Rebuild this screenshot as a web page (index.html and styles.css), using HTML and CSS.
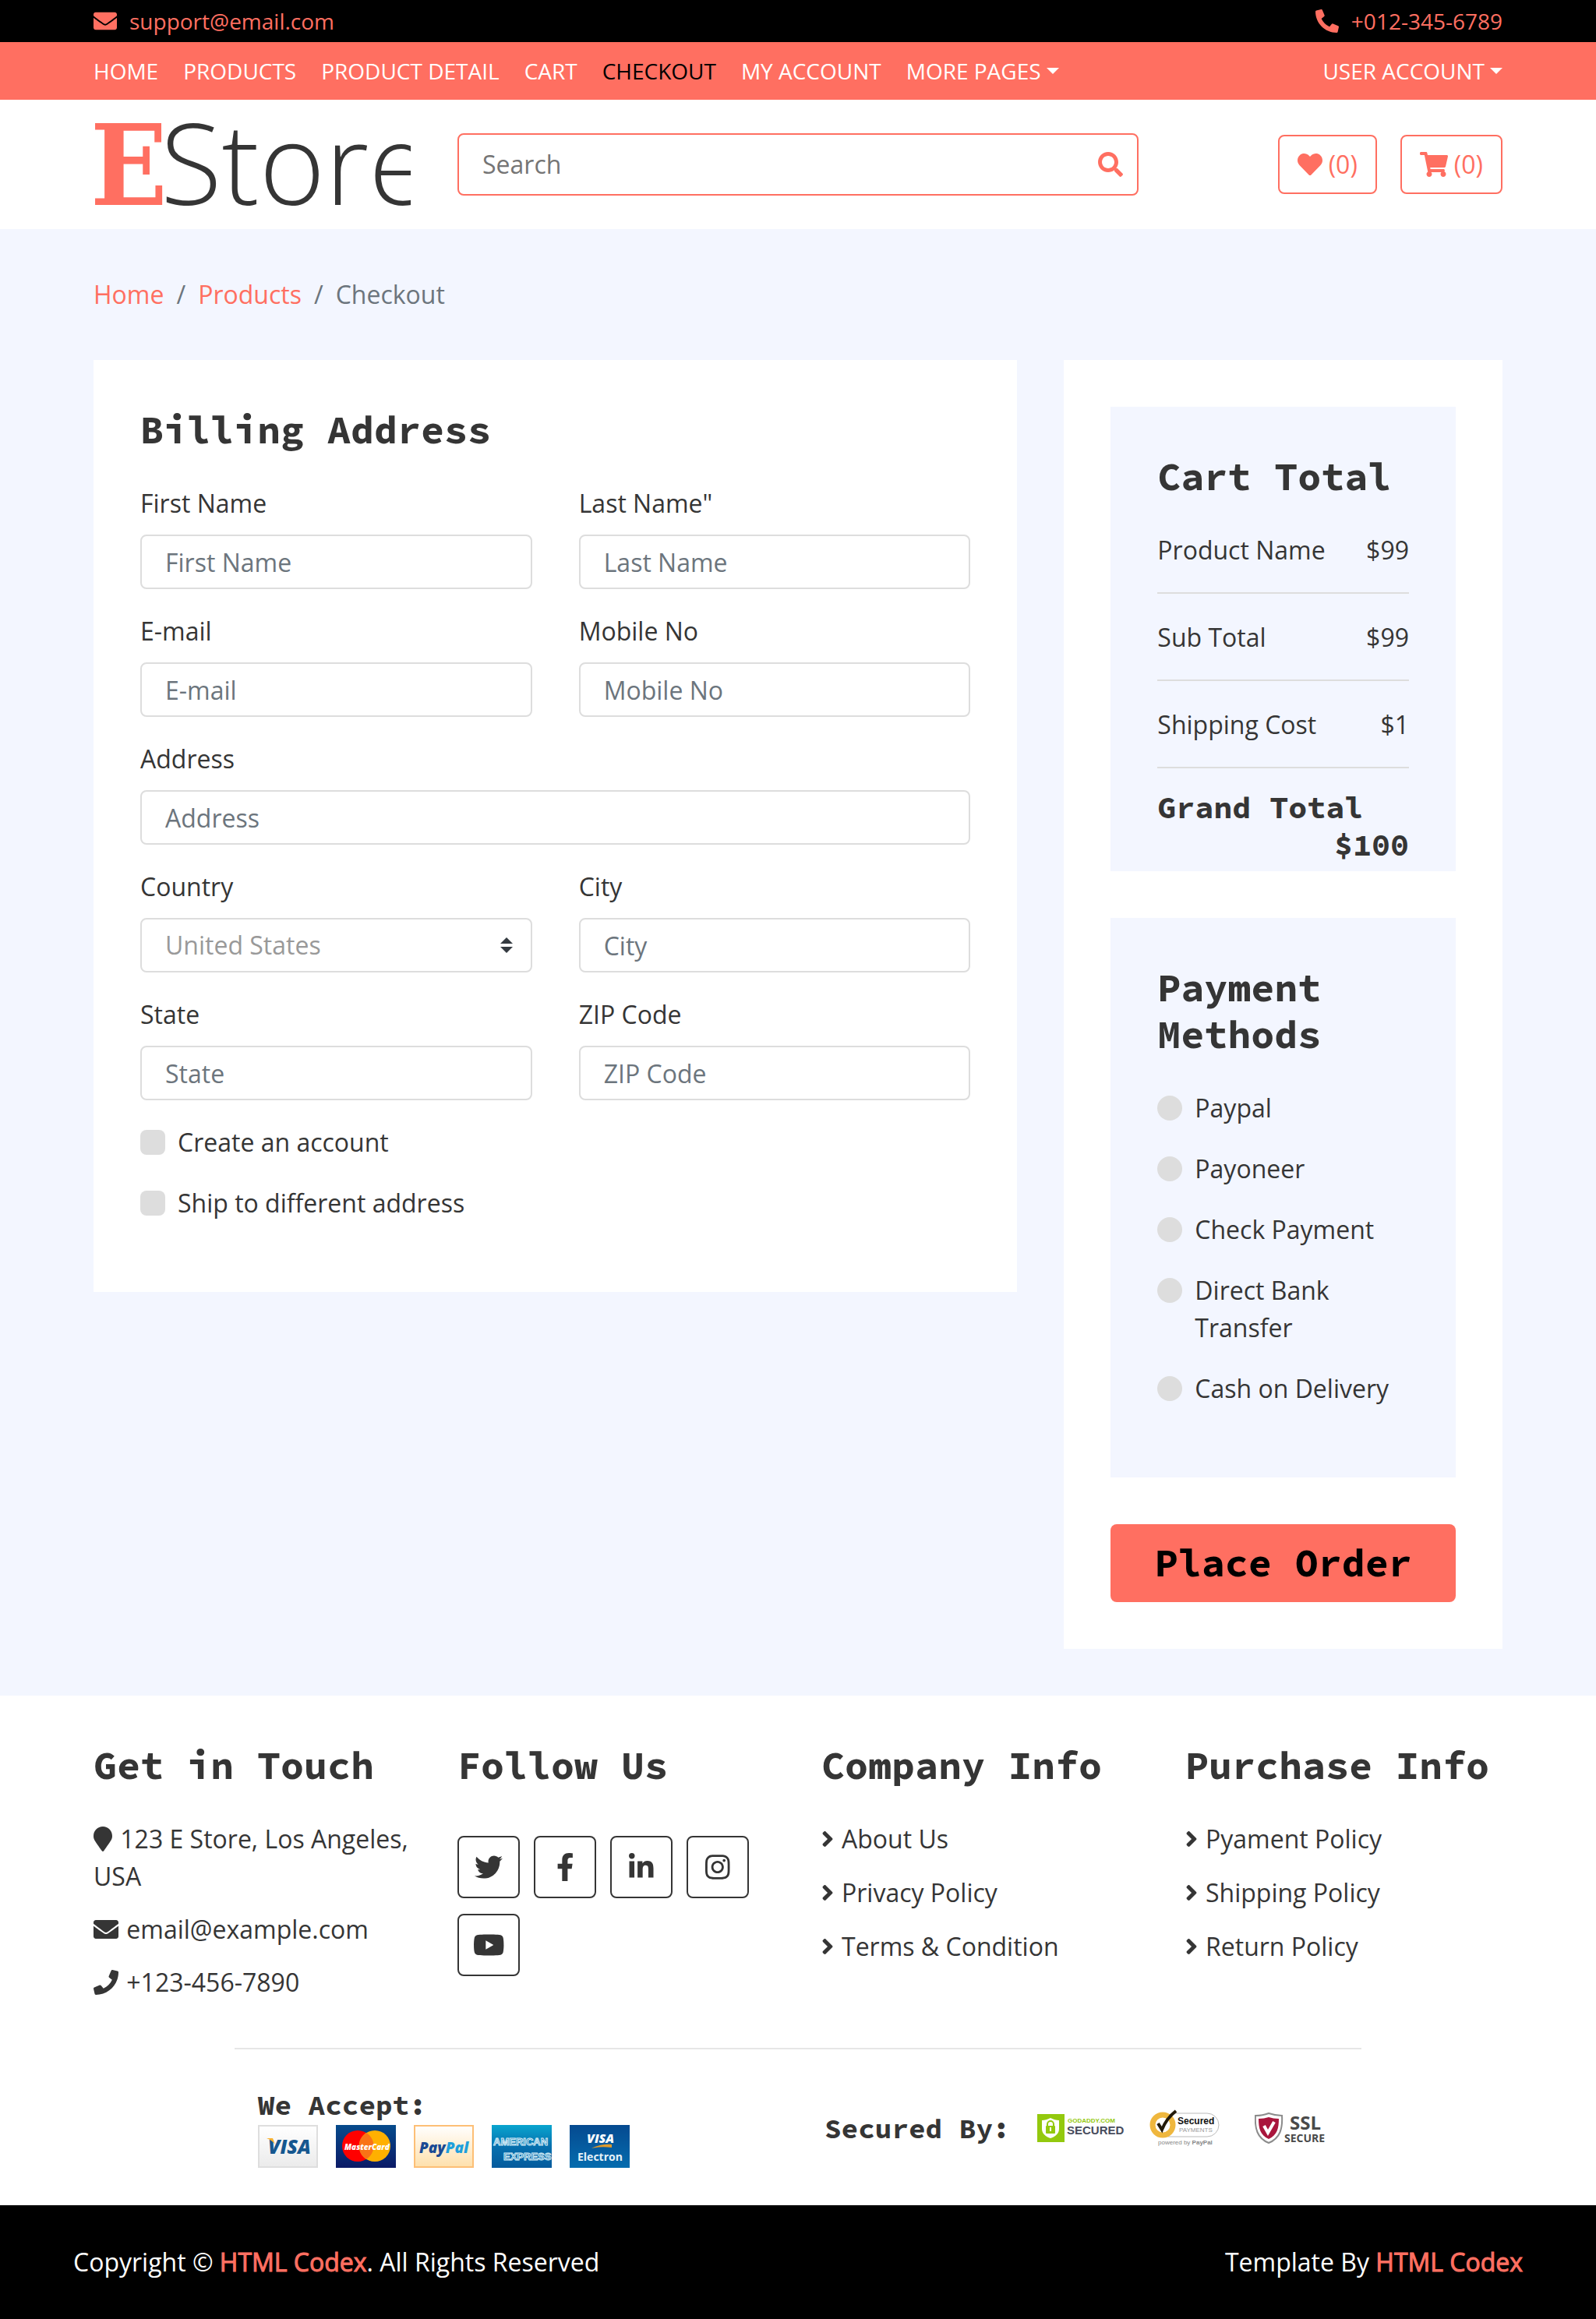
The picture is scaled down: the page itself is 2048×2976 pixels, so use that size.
FILE: index.html
```html
<!DOCTYPE html>
<html lang="en">
<head>
<meta charset="utf-8">
<meta name="viewport" content="width=device-width, initial-scale=1">
<title>E Store - Checkout</title>
<link rel="stylesheet" href="styles.css">
</head>
<body>
<svg class="sprite" aria-hidden="true">
  <symbol id="i-envelope" viewBox="0 0 512 512"><path d="M502.3 190.8c3.9-3.1 9.7-.2 9.7 4.7V400c0 26.5-21.5 48-48 48H48c-26.5 0-48-21.5-48-48V195.6c0-5 5.7-7.8 9.7-4.7 22.4 17.4 52.1 39.5 154.1 113.6 21.1 15.4 56.7 47.8 92.2 47.6 35.7.3 72-32.8 92.3-47.6 102-74.1 131.6-96.3 154-113.7zM256 320c23.2.4 56.6-29.2 73.4-41.4 132.7-96.3 142.8-104.7 173.4-128.7 5.8-4.5 9.2-11.5 9.2-18.9v-19c0-26.5-21.5-48-48-48H48c-26.5 0-48 21.5-48 48v19c0 7.4 3.4 14.3 9.2 18.9 30.6 23.9 40.7 32.4 173.4 128.7 16.8 12.2 50.2 41.8 73.4 41.4z"/></symbol>
  <symbol id="i-phone-alt" viewBox="0 0 512 512"><path d="M497.39 361.8l-112-48a24 24 0 0 0-28 6.9l-49.6 60.6A370.66 370.66 0 0 1 130.6 204.11l60.6-49.6a23.94 23.94 0 0 0 6.9-28l-48-112A24.16 24.16 0 0 0 122.6.61l-104 24A24 24 0 0 0 0 48c0 256.5 207.9 464 464 464a24 24 0 0 0 23.4-18.6l24-104a24.29 24.29 0 0 0-14.01-27.6z"/></symbol>
  <symbol id="i-phone" viewBox="0 0 512 512"><path d="M493.4 24.6l-104-24c-11.3-2.6-22.9 3.3-27.5 13.9l-48 112c-4.2 9.8-1.4 21.3 6.9 28l60.6 49.6c-36 76.7-98.9 140.5-177.2 177.2l-49.6-60.6c-6.8-8.3-18.2-11.1-28-6.9l-112 48C3.9 366.5-2 378.1.6 389.4l24 104C27.1 504.2 36.7 512 48 512c256.1 0 464-207.5 464-464 0-11.2-7.7-20.9-18.6-23.4z"/></symbol>
  <symbol id="i-marker" viewBox="0 0 384 512"><path d="M172.268 501.67C26.97 291.031 0 269.413 0 192 0 85.961 85.961 0 192 0s192 85.961 192 192c0 77.413-26.97 99.031-172.268 309.67-9.535 13.774-29.93 13.773-39.464 0z"/></symbol>
  <symbol id="i-heart" viewBox="0 0 512 512"><path d="M462.3 62.6C407.5 15.9 326 24.3 275.7 76.2L256 96.5l-19.7-20.3C186.1 24.3 104.5 15.9 49.7 62.6c-62.8 53.6-66.1 149.8-9.9 207.9l193.5 199.8c12.5 12.9 32.8 12.9 45.3 0l193.5-199.8c56.3-58.1 53-154.3-9.8-207.9z"/></symbol>
  <symbol id="i-cart" viewBox="0 0 576 512"><path d="M528.12 301.319l47.273-208C578.806 78.301 567.391 64 551.99 64H159.208l-9.166-44.81C147.758 8.021 137.93 0 126.529 0H24C10.745 0 0 10.745 0 24v16c0 13.255 10.745 24 24 24h69.883l70.248 343.435C147.325 417.1 136 435.222 136 456c0 30.928 25.072 56 56 56s56-25.072 56-56c0-15.674-6.447-29.835-16.824-40h209.647C430.447 426.165 424 440.326 424 456c0 30.928 25.072 56 56 56s56-25.072 56-56c0-22.172-12.888-41.332-31.579-50.405l5.517-24.276c3.413-15.018-8.002-29.319-23.403-29.319H218.117l-6.545-32h293.145c11.206 0 20.92-7.754 23.403-18.681z"/></symbol>
  <symbol id="i-search" viewBox="0 0 512 512"><path d="M505 442.7L405.3 343c-4.5-4.5-10.6-7-17-7H372c27.6-35.3 44-79.7 44-128C416 93.1 322.9 0 208 0S0 93.1 0 208s93.1 208 208 208c48.3 0 92.7-16.4 128-44v16.3c0 6.4 2.5 12.5 7 17l99.7 99.7c9.4 9.4 24.6 9.4 33.9 0l28.3-28.3c9.4-9.4 9.4-24.6.1-34zM208 336c-70.7 0-128-57.2-128-128 0-70.7 57.2-128 128-128 70.7 0 128 57.2 128 128 0 70.7-57.2 128-128 128z"/></symbol>
  <symbol id="i-angle" viewBox="0 0 256 512"><path d="M224.3 273l-136 136c-9.4 9.4-24.6 9.4-33.9 0l-22.6-22.6c-9.4-9.4-9.4-24.6 0-33.9l96.4-96.4-96.4-96.4c-9.4-9.4-9.4-24.6 0-33.9L54.3 103c9.4-9.4 24.6-9.4 33.9 0l136 136c9.5 9.4 9.5 24.6.1 34z"/></symbol>
</svg>

<div class="top-bar">
  <a href="mailto:support@email.com"><svg class="icon"><use href="#i-envelope"/></svg>support@email.com</a>
  <a href="tel:+0123456789"><svg class="icon"><use href="#i-phone-alt"/></svg>+012-345-6789</a>
</div>

<nav class="nav">
  <div class="nav-links">
    <a href="#">HOME</a>
    <a href="#">PRODUCTS</a>
    <a href="#">PRODUCT DETAIL</a>
    <a href="#">CART</a>
    <a href="#" class="active" aria-current="page">CHECKOUT</a>
    <a href="#">MY ACCOUNT</a>
    <a href="#" class="dropdown">MORE PAGES</a>
  </div>
  <a href="#" class="dropdown">USER ACCOUNT</a>
</nav>

<header class="header">
  <a class="logo" href="#" aria-label="E Store">
    <svg viewBox="0 0 407 106"><text class="logo-e" x="-4" y="105">E</text><text class="logo-store" x="86" y="105">Store</text></svg>
  </a>
  <form class="search" role="search">
    <input type="search" placeholder="Search" aria-label="Search">
    <button type="button" aria-label="Submit search"><svg class="icon"><use href="#i-search"/></svg></button>
  </form>
  <div class="user">
    <a class="btn" href="#"><svg class="icon"><use href="#i-heart"/></svg>(0)</a>
    <a class="btn" href="#"><svg class="icon wide"><use href="#i-cart"/></svg>(0)</a>
  </div>
</header>

<main class="main">
  <nav class="breadcrumb" aria-label="Breadcrumb">
    <a href="#">Home</a><span>/</span><a href="#">Products</a><span>/</span><span>Checkout</span>
  </nav>

  <form class="checkout">
    <section class="billing">
      <h2>Billing Address</h2>
      <div class="fields">
        <div class="field"><label for="first">First Name</label><input id="first" type="text" placeholder="First Name"></div>
        <div class="field"><label for="last">Last Name"</label><input id="last" type="text" placeholder="Last Name"></div>
        <div class="field"><label for="email">E-mail</label><input id="email" type="text" placeholder="E-mail"></div>
        <div class="field"><label for="mobile">Mobile No</label><input id="mobile" type="text" placeholder="Mobile No"></div>
        <div class="field full"><label for="address">Address</label><input id="address" type="text" placeholder="Address"></div>
        <div class="field"><label for="country">Country</label>
          <div class="select">
            <select id="country"><option>United States</option></select>
            <svg viewBox="0 0 4 5" aria-hidden="true"><path d="M2 0L0 2h4zm0 5L0 3h4z"/></svg>
          </div>
        </div>
        <div class="field"><label for="city">City</label><input id="city" type="text" placeholder="City"></div>
        <div class="field"><label for="state">State</label><input id="state" type="text" placeholder="State"></div>
        <div class="field"><label for="zip">ZIP Code</label><input id="zip" type="text" placeholder="ZIP Code"></div>
        <div class="choice full"><input type="checkbox" id="new-account"><label for="new-account">Create an account</label></div>
        <div class="choice full"><input type="checkbox" id="ship-to"><label for="ship-to">Ship to different address</label></div>
      </div>
    </section>

    <aside class="summary">
      <section class="panel totals">
        <h2>Cart Total</h2>
        <p>Product Name<span>$99</span></p>
        <p>Sub Total<span>$99</span></p>
        <p>Shipping Cost<span>$1</span></p>
        <h3>Grand Total<span>$100</span></h3>
      </section>
      <section class="panel">
        <h2>Payment Methods</h2>
        <div class="methods">
          <div class="choice"><input type="radio" name="pay" id="pay-1"><label for="pay-1">Paypal</label></div>
          <div class="choice"><input type="radio" name="pay" id="pay-2"><label for="pay-2">Payoneer</label></div>
          <div class="choice"><input type="radio" name="pay" id="pay-3"><label for="pay-3">Check Payment</label></div>
          <div class="choice"><input type="radio" name="pay" id="pay-4"><label for="pay-4">Direct Bank Transfer</label></div>
          <div class="choice"><input type="radio" name="pay" id="pay-5"><label for="pay-5">Cash on Delivery</label></div>
        </div>
      </section>
      <button type="button" class="place-order">Place Order</button>
    </aside>
  </form>
</main>

<footer class="footer">
  <div class="footer-cols">
    <section>
      <h2>Get in Touch</h2>
      <div class="contact">
        <p><svg class="icon marker"><use href="#i-marker"/></svg> 123 E Store, Los Angeles, USA</p>
        <p><svg class="icon"><use href="#i-envelope"/></svg> email@example.com</p>
        <p><svg class="icon"><use href="#i-phone"/></svg> +123-456-7890</p>
      </div>
    </section>
    <section>
      <h2>Follow Us</h2>
      <div class="social">
        <a href="#" aria-label="Twitter"><svg viewBox="0 0 512 512"><path d="M459.37 151.716c.325 4.548.325 9.097.325 13.645 0 138.72-105.583 298.558-298.558 298.558-59.452 0-114.68-17.219-161.137-47.106 8.447.974 16.568 1.299 25.34 1.299 49.055 0 94.213-16.568 130.274-44.832-46.132-.975-84.792-31.188-98.112-72.772 6.498.974 12.995 1.624 19.818 1.624 9.421 0 18.843-1.3 27.614-3.573-48.081-9.747-84.143-51.98-84.143-102.985v-1.299c13.969 7.797 30.214 12.67 47.431 13.319-28.264-18.843-46.781-51.005-46.781-87.391 0-19.492 5.197-37.36 14.294-52.954 51.655 63.675 129.3 105.258 216.365 109.807-1.624-7.797-2.599-15.918-2.599-24.04 0-57.828 46.782-104.934 104.934-104.934 30.213 0 57.502 12.67 76.67 33.137 23.715-4.548 46.456-13.32 66.599-25.34-7.798 24.366-24.366 44.833-46.132 57.827 21.117-2.273 41.584-8.122 60.426-16.243-14.292 20.791-32.161 39.308-52.628 54.253z"/></svg></a>
        <a href="#" aria-label="Facebook"><svg viewBox="0 0 320 512"><path d="M279.14 288l14.22-92.66h-88.91v-60.13c0-25.35 12.42-50.06 52.24-50.06h40.42V6.26S260.43 0 225.36 0c-73.22 0-121.08 44.38-121.08 124.72v70.62H22.89V288h81.39v224h100.17V288z"/></svg></a>
        <a href="#" aria-label="LinkedIn"><svg viewBox="0 0 448 512"><path d="M100.28 448H7.4V148.9h92.88zM53.79 108.1C24.09 108.1 0 83.5 0 53.8a53.79 53.79 0 0 1 107.58 0c0 29.7-24.1 54.3-53.79 54.3zM447.9 448h-92.68V302.4c0-34.7-.7-79.2-48.29-79.2-48.29 0-55.69 37.7-55.69 76.7V448h-92.78V148.9h89.08v40.8h1.3c12.4-23.5 42.69-48.3 87.88-48.3 94 0 111.28 61.9 111.28 142.3V448z"/></svg></a>
        <a href="#" aria-label="Instagram"><svg viewBox="0 0 448 512"><path d="M224.1 141c-63.6 0-114.9 51.3-114.9 114.9s51.3 114.9 114.9 114.9S339 319.5 339 255.9 287.7 141 224.1 141zm0 189.6c-41.1 0-74.7-33.5-74.7-74.7s33.5-74.7 74.7-74.7 74.7 33.5 74.7 74.7-33.6 74.7-74.7 74.7zm146.4-194.3c0 14.9-12 26.8-26.8 26.8-14.9 0-26.8-12-26.8-26.8s12-26.8 26.8-26.8 26.8 12 26.8 26.8zm76.1 27.2c-1.7-35.9-9.9-67.7-36.2-93.9-26.2-26.2-58-34.4-93.9-36.2-37-2.1-147.9-2.1-184.9 0-35.8 1.7-67.6 9.9-93.9 36.1s-34.4 58-36.2 93.9c-2.1 37-2.1 147.9 0 184.9 1.7 35.9 9.9 67.7 36.2 93.9s58 34.4 93.9 36.2c37 2.1 147.9 2.1 184.9 0 35.9-1.7 67.7-9.9 93.9-36.2 26.2-26.2 34.4-58 36.2-93.9 2.1-37 2.1-147.8 0-184.8zM398.8 388c-7.8 19.6-22.9 34.7-42.6 42.6-29.5 11.7-99.5 9-132.1 9s-102.7 2.6-132.1-9c-19.6-7.8-34.7-22.9-42.6-42.6-11.7-29.5-9-99.5-9-132.1s-2.6-102.7 9-132.1c7.8-19.6 22.9-34.7 42.6-42.6 29.5-11.7 99.5-9 132.1-9s102.7-2.6 132.1 9c19.6 7.8 34.7 22.9 42.6 42.6 11.7 29.5 9 99.5 9 132.1s2.7 102.7-9 132.1z"/></svg></a>
        <a href="#" aria-label="YouTube"><svg viewBox="0 0 576 512"><path d="M549.655 124.083c-6.281-23.65-24.787-42.276-48.284-48.597C458.781 64 288 64 288 64S117.22 64 74.629 75.486c-23.497 6.322-42.003 24.947-48.284 48.597-11.412 42.867-11.412 132.305-11.412 132.305s0 89.438 11.412 132.305c6.281 23.65 24.787 41.5 48.284 47.821C117.22 448 288 448 288 448s170.78 0 213.371-11.486c23.497-6.321 42.003-24.171 48.284-47.821 11.412-42.867 11.412-132.305 11.412-132.305s0-89.438-11.412-132.305zm-317.51 213.508V175.185l142.739 81.205-142.739 81.201z"/></svg></a>
      </div>
    </section>
    <section>
      <h2>Company Info</h2>
      <ul class="links">
        <li><a href="#"><svg class="icon angle"><use href="#i-angle"/></svg>About Us</a></li>
        <li><a href="#"><svg class="icon angle"><use href="#i-angle"/></svg>Privacy Policy</a></li>
        <li><a href="#"><svg class="icon angle"><use href="#i-angle"/></svg>Terms &amp; Condition</a></li>
      </ul>
    </section>
    <section>
      <h2>Purchase Info</h2>
      <ul class="links">
        <li><a href="#"><svg class="icon angle"><use href="#i-angle"/></svg>Pyament Policy</a></li>
        <li><a href="#"><svg class="icon angle"><use href="#i-angle"/></svg>Shipping Policy</a></li>
        <li><a href="#"><svg class="icon angle"><use href="#i-angle"/></svg>Return Policy</a></li>
      </ul>
    </section>
  </div>

  <div class="payment">
    <section class="accept">
      <h4>We Accept:</h4>
      <div class="cards">
        <svg viewBox="0 0 77 55" role="img" aria-label="Visa">
          <defs><linearGradient id="g1" x2="0" y2="1"><stop stop-color="#fff"/><stop offset="1" stop-color="#ebebeb"/></linearGradient></defs>
          <rect x="1" y="1" width="75" height="53" fill="url(#g1)" stroke="#dedede" stroke-width="2"/>
          <text class="brand" x="13" y="37" font-size="25" fill="#15578f">VISA</text>
          <path d="M11 17h8l3 8c-3-4-6-6-11-8z" fill="#f9b233"/>
        </svg>
        <svg viewBox="0 0 77 55" role="img" aria-label="MasterCard">
          <defs><linearGradient id="g2" x2="0" y2="1"><stop stop-color="#064b8c"/><stop offset="1" stop-color="#0b1a66"/></linearGradient></defs>
          <rect width="77" height="55" fill="url(#g2)"/>
          <circle cx="28" cy="27" r="20" fill="#f00"/><circle cx="50" cy="27" r="20" fill="#ffb000"/>
          <path d="M39 10a20 20 0 0 1 0 34a20 20 0 0 1 0-34z" fill="#f97316"/>
          <text class="brand" x="11" y="32" font-size="10" fill="#fff">MasterCard</text>
        </svg>
        <svg viewBox="0 0 77 55" role="img" aria-label="PayPal">
          <defs><linearGradient id="g3" x2="0" y2="1"><stop stop-color="#fff"/><stop offset="1" stop-color="#fee0ab"/></linearGradient></defs>
          <rect x="1" y="1" width="75" height="53" fill="url(#g3)" stroke="#fdbf76" stroke-width="2"/>
          <text class="brand" x="7" y="36" font-size="19" fill="#1a4a94">Pay<tspan fill="#1fa0dc">Pal</tspan></text>
        </svg>
        <svg viewBox="0 0 77 55" role="img" aria-label="American Express">
          <defs><linearGradient id="g4" x2="0" y2="1"><stop stop-color="#09a5cf"/><stop offset=".5" stop-color="#0670ae"/><stop offset="1" stop-color="#055a9c"/></linearGradient></defs>
          <rect width="77" height="55" fill="url(#g4)"/>
          <g class="outlined" font-size="13"><text x="2" y="26">AMERICAN</text><text x="15" y="45">EXPRESS</text></g>
        </svg>
        <svg viewBox="0 0 77 55" role="img" aria-label="Visa Electron">
          <defs><linearGradient id="g5" x2="0" y2="1"><stop stop-color="#054a90"/><stop offset="1" stop-color="#056cae"/></linearGradient></defs>
          <rect width="77" height="55" fill="url(#g5)"/>
          <text class="brand" x="22" y="23" font-size="16" fill="#fff">VISA</text>
          <path d="M28 30c8-4 17-6 26-5v4c-9-1-17-1-26 1z" fill="#e19a2b"/>
          <text class="sans-bold" x="10" y="46" font-size="14" fill="#e6f1f8">Electron</text>
        </svg>
      </div>
    </section>
    <section class="secured">
      <h4>Secured By:</h4>
      <svg class="seal-godaddy" viewBox="0 0 112 36" role="img" aria-label="GoDaddy.com Secured">
        <rect width="35" height="36" fill="#93c90e"/>
        <path d="M6 8c4 0 7-1 11-3 4 2 7 3 11 3v11c0 6-5 10-11 12C11 29 6 25 6 19z" fill="#fff"/>
        <path d="M13 15v-2a4 4 0 0 1 8 0v2" fill="none" stroke="#93c90e" stroke-width="2"/><rect x="11" y="15" width="12" height="10" rx="1" fill="#93c90e"/><path d="M17 17v5" stroke="#fff" stroke-width="2"/>
        <text class="arial-bold" x="39" y="11" font-size="8" fill="#93c90e">GODADDY.COM</text>
        <text class="arial-bold" x="38" y="26" font-size="15" fill="#474c5c">SECURED</text>
      </svg>
      <svg class="seal-paypal" viewBox="0 0 92 48" role="img" aria-label="Secured Payments powered by PayPal">
        <path d="M30 5h44a15 15 0 0 1 0 30H24" fill="none" stroke="#bbb"/>
        <circle cx="17" cy="20" r="13" fill="#fff" stroke="#efb73e" stroke-width="7"/>
        <path d="M11 18l5 8c4-10 9-17 18-24" fill="none" stroke="#231a0a" stroke-width="4"/>
        <text class="arial-bold" x="36" y="19" font-size="12" fill="#111">Secured</text>
        <text class="arial" x="38" y="29" font-size="8" fill="#999">PAYMENTS</text>
        <text class="arial" x="11" y="45" font-size="8" fill="#888">powered by <tspan font-weight="700">PayPal</tspan></text>
      </svg>
      <svg class="seal-ssl" viewBox="0 0 90 40" role="img" aria-label="SSL Secure">
        <path d="M1 4c6 0 12-1 17-3 6 2 11 3 17 3 1 16-2 29-17 35C3 33 0 20 1 4z" fill="#fff" stroke="#8c8c8c" stroke-width="2"/>
        <path d="M5 8c5 0 9-1 13-2 4 1 8 2 13 2 0 12-2 21-13 26C7 29 5 20 5 8z" fill="#a9163c"/>
        <path d="M12 17l5 9 8-14" fill="none" stroke="#fff" stroke-width="4"/>
        <text class="sans-bold" x="45" y="22" font-size="24" fill="#4a4a4a">SSL</text>
        <text class="sans-bold" x="38" y="38" font-size="14" fill="#4a4a4a">SECURE</text>
      </svg>
    </section>
  </div>
</footer>

<div class="bottom">
  <p>Copyright © <a href="#">HTML Codex</a>. All Rights Reserved</p>
  <p>Template By <a href="#">HTML Codex</a></p>
</div>
</body>
</html>
```
FILE: styles.css
```css
:root {
  --accent: #ff6f61;
  --dark: #353535;
  --pale: #f3f6ff;
  --line: #dddddd;
  --mono: "Source Code Pro", "Noto Sans Mono CJK SC", "DejaVu Sans Mono", monospace;
}

* { box-sizing: border-box; }

body {
  margin: 0;
  background: #fff;
  color: var(--dark);
  font: 32px/48px "Open Sans", sans-serif;
}

h2, h3, h4, p, ul { margin: 0; padding: 0; }
ul { list-style: none; }
a { color: inherit; text-decoration: none; }
input, select, button { font: inherit; color: inherit; margin: 0; }
h2, h3, h4, .place-order { font-family: var(--mono); font-weight: 700; }
h2 { margin-bottom: 40px; font-size: 50px; line-height: 60px; }
h3 { font-size: 40px; line-height: 48px; }
h4 { font-size: 36px; line-height: 43px; white-space: nowrap; }

.sprite { position: absolute; width: 0; height: 0; }
.icon { width: 32px; height: 32px; fill: currentColor; vertical-align: -4px; }
.icon.wide { width: 36px; }
.icon.marker { width: 24px; }
.icon.angle { width: 16px; margin-right: 10px; }

/* Top bar and navigation */
.top-bar, .nav, .bottom {
  display: flex;
  justify-content: space-between;
  align-items: center;
}
.top-bar {
  padding: 6px 120px;
  background: #000;
  color: var(--accent);
  font-size: 28px;
  line-height: 42px;
}
.top-bar a { display: flex; align-items: center; gap: 16px; }
.top-bar .icon { width: 30px; height: 30px; }

.nav {
  padding: 16px 120px;
  background: var(--accent);
  color: #fff;
  font-size: 28px;
  line-height: 42px;
}
.nav-links { display: flex; gap: 32px; }
.nav .active { color: #000; }
.dropdown::after {
  content: "";
  display: inline-block;
  margin-left: 7px;
  vertical-align: 7px;
  border: 8px solid transparent;
  border-top-color: currentColor;
  border-bottom: 0;
}

/* Header */
.header {
  display: grid;
  grid-template-columns: repeat(12, 1fr);
  column-gap: 60px;
  align-items: center;
  padding: 30px 120px;
}
.logo { grid-column: span 3; }
.logo svg { display: block; width: 100%; }
.logo-e { font: 700 144px "DejaVu Serif Condensed", "DejaVu Serif", serif; fill: var(--accent); }
.logo-store { font: 300 144px "Open Sans", sans-serif; fill: var(--dark); }

.search {
  grid-column: span 6;
  display: flex;
  align-items: center;
  height: 80px;
  padding: 0 18px 0 30px;
  border: 2px solid var(--accent);
  border-radius: 8px;
}
.search input { flex: 1; min-width: 0; padding: 0; border: 0; background: none; outline: 0; appearance: none; }
.search input::placeholder { color: #757575; opacity: 1; }
.search button { display: flex; padding: 0; border: 0; background: none; color: var(--accent); }

.user { grid-column: span 3; display: flex; justify-content: flex-end; gap: 30px; }
.btn {
  display: flex;
  align-items: center;
  gap: 8px;
  padding: 12px 23px;
  border: 2px solid var(--accent);
  border-radius: 8px;
  color: var(--accent);
}

/* Checkout */
.main { padding: 60px 120px; background: var(--pale); }
.breadcrumb { display: flex; gap: 16px; margin-bottom: 60px; color: #6c757d; }
.breadcrumb a { color: var(--accent); }

.checkout {
  display: grid;
  grid-template-columns: repeat(12, 1fr);
  column-gap: 60px;
  align-items: start;
}
.billing { grid-column: span 8; padding: 60px 60px 90px; background: #fff; }
.summary { grid-column: span 4; display: grid; row-gap: 60px; padding: 60px; background: #fff; }

.fields { display: grid; grid-template-columns: 1fr 1fr; gap: 30px 60px; }
.full { grid-column: 1 / -1; }
.field label { display: block; margin-bottom: 16px; }
.field input, .field select {
  display: block;
  width: 100%;
  height: 70px;
  padding: 0 30px;
  border: 2px solid var(--line);
  border-radius: 8px;
  background: #fff;
  appearance: none;
}
.field input::placeholder { color: #6c757d; opacity: 1; }
.field select { color: #999; }
.select { position: relative; }
.select svg { position: absolute; right: 25px; top: 25px; width: 16px; height: 20px; fill: #343a40; pointer-events: none; }

.choice { display: flex; gap: 16px; }
.choice input {
  flex: none;
  width: 32px;
  height: 32px;
  margin-top: 8px;
  border-radius: 8px;
  background: var(--line);
  appearance: none;
}
.choice input[type="radio"] { border-radius: 50%; }
.choice input:checked { background: var(--accent); }

.panel { padding: 60px; background: var(--pale); }
.totals { padding-bottom: 10px; }
.totals p {
  display: flex;
  justify-content: space-between;
  margin-bottom: 32px;
  padding-bottom: 30px;
  border-bottom: 2px solid var(--line);
}
.totals p:last-of-type { margin-bottom: 26px; }
.totals h3 span { display: block; text-align: right; }
.methods { display: grid; row-gap: 30px; padding-bottom: 30px; }

.place-order {
  height: 100px;
  padding: 0;
  border: 0;
  border-radius: 8px;
  background: var(--accent);
  color: #000;
  font-size: 50px;
  line-height: 60px;
}

/* Footer */
.footer { padding: 60px 120px 48px; }
.footer-cols { display: grid; grid-template-columns: repeat(4, 1fr); column-gap: 60px; }
.footer-cols h2 { white-space: nowrap; }
.contact { display: grid; row-gap: 20px; }
.links { display: grid; row-gap: 21px; }
.contact .icon { margin-right: 2px; }
.social { display: flex; flex-wrap: wrap; gap: 20px 18px; padding-top: 20px; }
.social a {
  display: flex;
  align-items: center;
  justify-content: center;
  width: 80px;
  height: 80px;
  border: 2px solid var(--dark);
  border-radius: 8px;
}
.social svg { height: 36px; fill: currentColor; }

.payment {
  display: grid;
  grid-template-columns: 1fr 1fr;
  align-items: center;
  width: 80%;
  margin: 60px auto 0;
  padding-top: 50px;
  border-top: 2px solid #e6e6e6;
}
.accept { padding: 0 30px; }
.accept h4 { margin-bottom: 4px; }
.cards { display: flex; gap: 23px; }
.cards svg { width: 77px; height: 55px; }
.secured { display: flex; align-items: center; padding-left: 34px; }
.secured h4 { margin-right: 35px; }
.secured svg { flex: none; }
.seal-godaddy { width: 112px; height: 36px; margin-right: 32px; }
.seal-paypal { width: 92px; height: 48px; margin-right: 43px; }
.seal-ssl { width: 90px; height: 40px; }
.brand { font-family: "Open Sans", sans-serif; font-weight: 800; font-style: italic; }
.sans-bold { font-family: "Open Sans", sans-serif; font-weight: 700; }
.arial { font-family: "Liberation Sans", sans-serif; }
.arial-bold { font-family: "Liberation Sans", sans-serif; font-weight: 700; }
.outlined { font-family: "Liberation Sans", sans-serif; font-weight: 700; fill: #0670ae; stroke: #d8eef8; stroke-width: 1px; }

.bottom { padding: 49px 94px; background: #000; color: #fff; }
.bottom a { color: var(--accent); -webkit-text-stroke: 1px var(--accent); }
```
